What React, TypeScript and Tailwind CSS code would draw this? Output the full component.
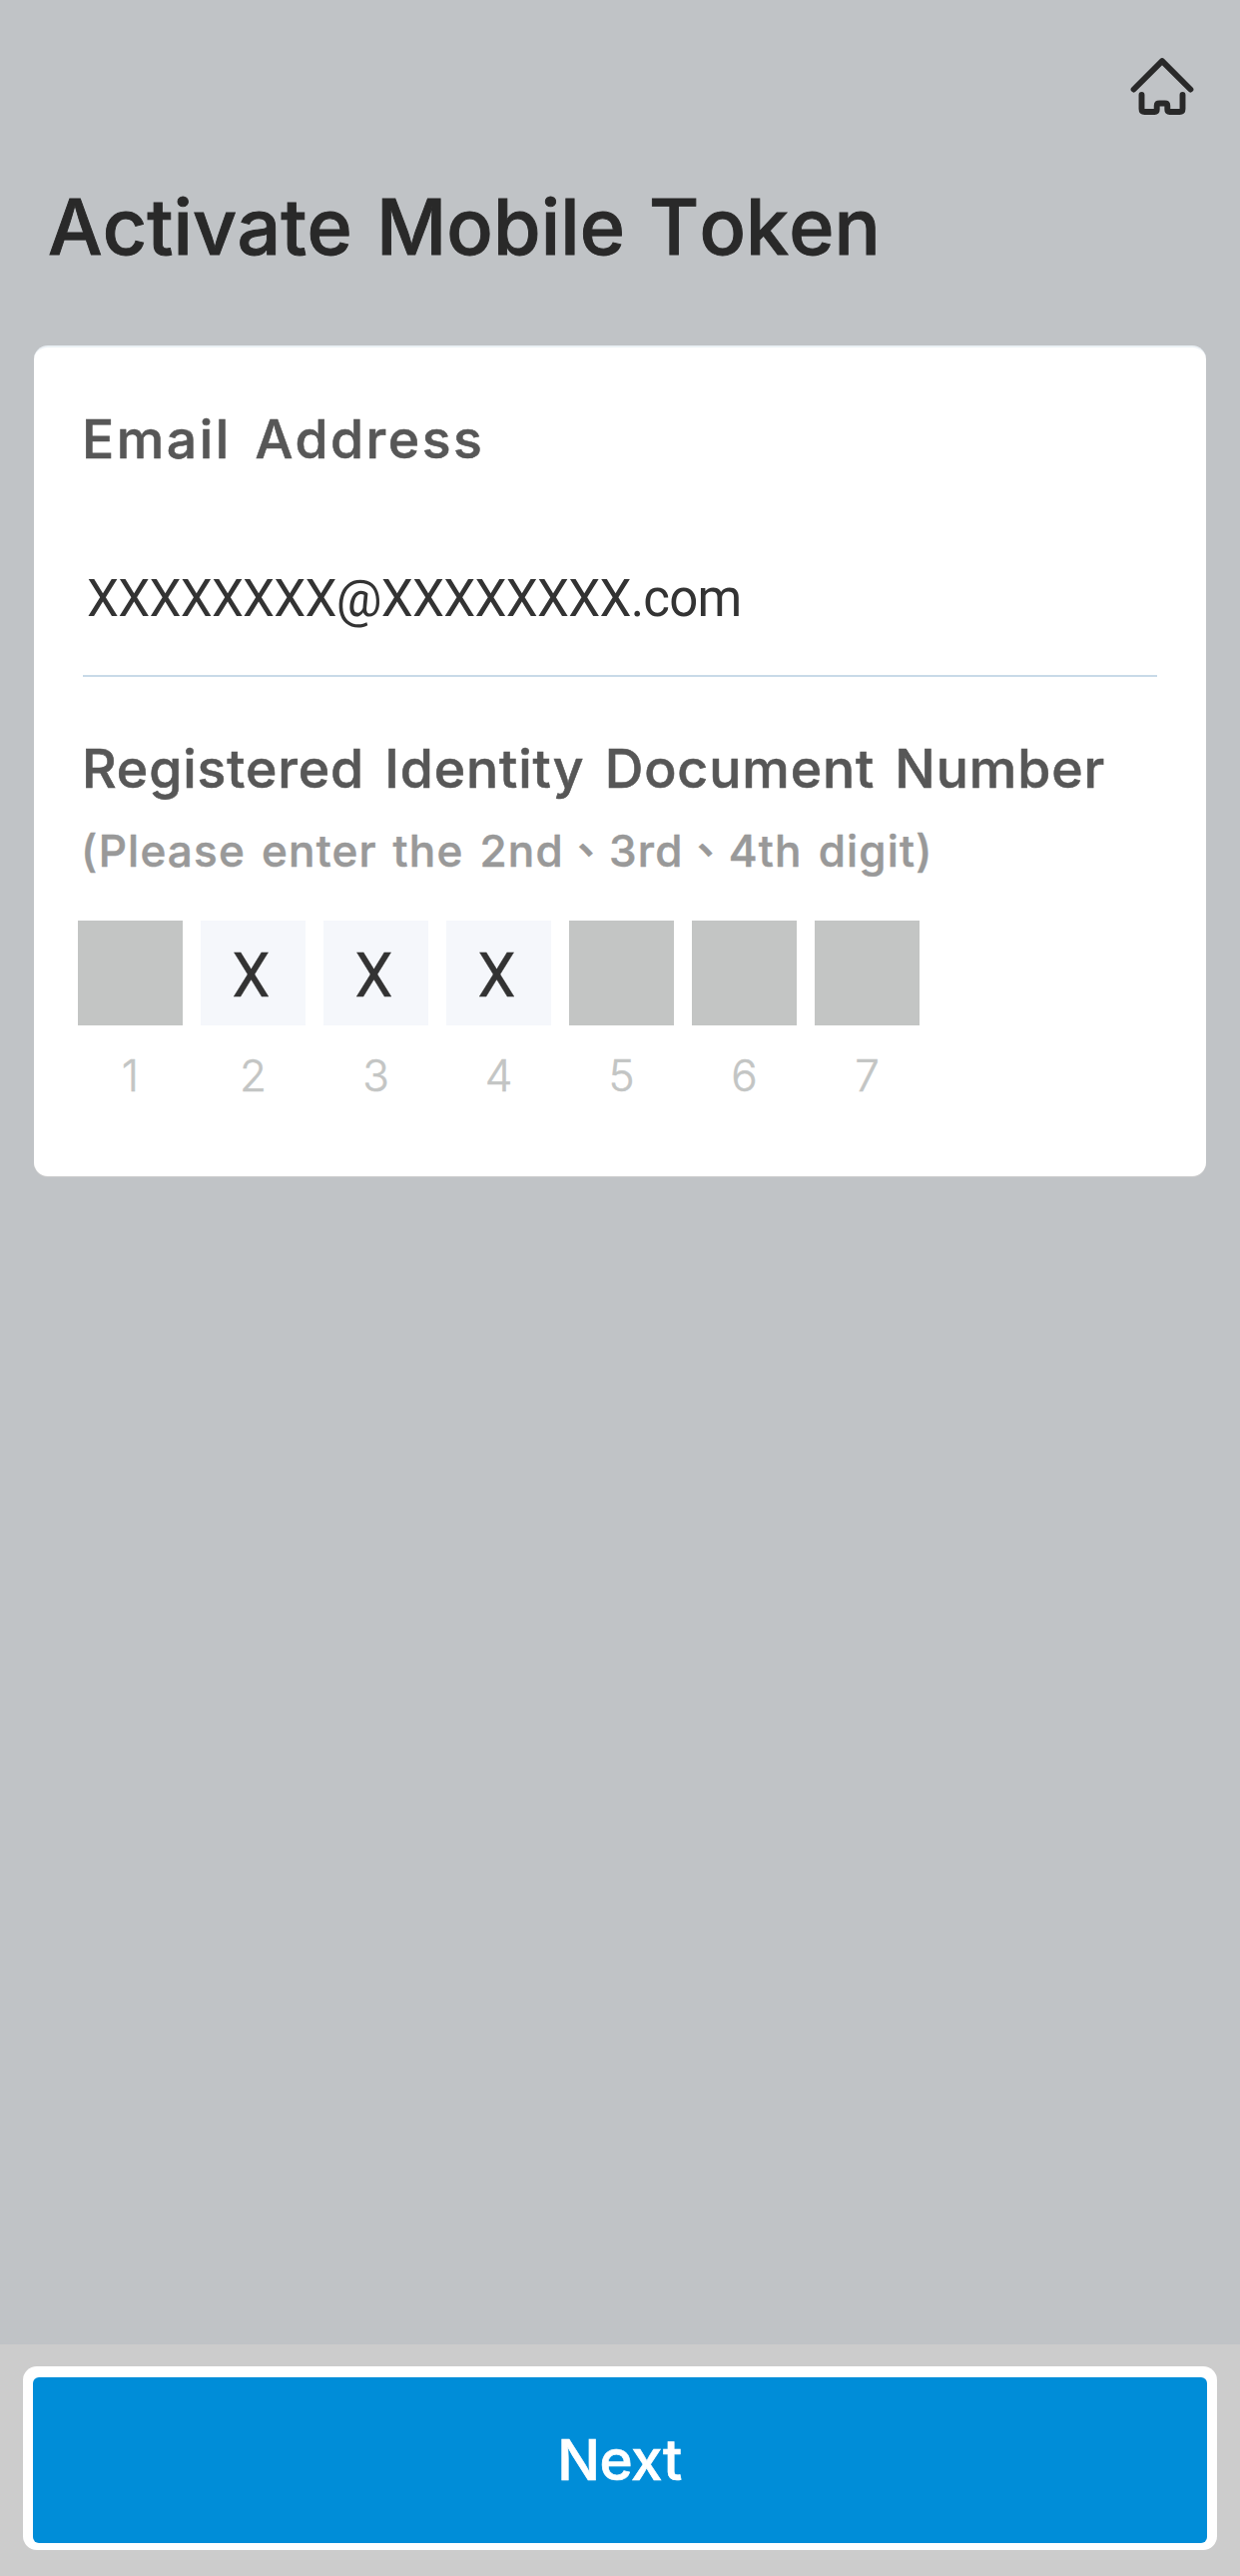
import { useState } from "react";

interface DigitSlot {
  position: number;
  value?: string;
  editable: boolean;
}

const SLOTS: DigitSlot[] = [
  { position: 1, editable: false },
  { position: 2, editable: true, value: "X" },
  { position: 3, editable: true, value: "X" },
  { position: 4, editable: true, value: "X" },
  { position: 5, editable: false },
  { position: 6, editable: false },
  { position: 7, editable: false },
];

function HomeIcon() {
  return (
    <svg width="66" height="60" viewBox="0 0 66 60" fill="none" stroke="#292929" strokeWidth="5.9" strokeLinecap="round" strokeLinejoin="round">
      <path d="M4.6 33.5 33 5.2l28.4 28.3" />
      <path d="M12.5 39v14q0 3 3 3h10q2.2 0 2.2-2.2v-3.8q0-2.500 2.500-2.500h5.600q2.500 0 2.500 2.500v3.800q0 2.200 2.200 2.200h10q3 0 3-3V39" />
    </svg>
  );
}

function DigitBox({ slot }: { slot: DigitSlot }) {
  return (
    <div className="flex w-[105px] flex-col items-center">
      {slot.editable ? (
        <div className="flex h-[105px] w-full items-center justify-center bg-[#f5f7fb] pt-[8px] pr-[4px] font-['Roboto',sans-serif] text-[60.5px] leading-none text-[#333] [-webkit-text-stroke:0.4px]">
          <span>{slot.value}</span>
        </div>
      ) : (
        <div className="h-[105px] w-full bg-[#c3c5c4]" />
      )}
      <span className="mt-[26px] text-[44px] leading-[48px] font-light text-[#c3c5c4] [-webkit-text-stroke:0.5px]">{slot.position}</span>
    </div>
  );
}

export default function App() {
  const [email] = useState("XXXXXXXX@XXXXXXXX.com");

  return (
    <div className="flex h-[2580px] w-[1242px] flex-col bg-[#c0c3c6] font-['Inter','Noto_Sans_CJK_TC',sans-serif]">
      <header className="flex h-[346px] flex-col">
        <div className="flex justify-end pt-[56px] pr-[45px]">
          <HomeIcon />
        </div>
        <h1 className="mt-[64px] ml-[48px] text-[77px] leading-[94px] font-medium tracking-[0.1px] [word-spacing:3.5px] whitespace-nowrap text-[#292929] [font-kerning:none] [-webkit-text-stroke:0.9px]">
          Activate Mobile Token
        </h1>
      </header>

      <main className="mx-[34px] h-[832px] rounded-[14px] border-t-2 border-[#ebf1f5] bg-white px-[49px] shadow-[0_1px_0_#d0d0d0]">
        <h2 className="-ml-[1px] pt-[59px] text-[53.5px] leading-[66px] font-medium tracking-[2.5px] [word-spacing:7px] text-[#575757] [-webkit-text-stroke:0.6px]">
          Email Address
        </h2>
        <div className="mt-[43px] flex h-[162px] items-center border-b-2 border-[#c8dae8] pt-[9px] pl-[4px] font-['Roboto',sans-serif] text-[51px] tracking-[-0.75px] text-[#333]">
          {email}
        </div>

        <h2 className="mt-[59px] -ml-[1px] text-[53.5px] leading-[66px] font-medium tracking-[0.9px] [word-spacing:5px] whitespace-nowrap text-[#575757] [-webkit-text-stroke:0.6px]">
          Registered Identity Document Number
        </h2>
        <p className="mt-[22px] -ml-[2px] text-[44px] leading-[54px] font-medium tracking-[1.2px] [word-spacing:3px] whitespace-nowrap text-[#999] [-webkit-text-stroke:0.5px]">
          (Please enter the 2nd、3rd、4th digit)
        </p>

        {/* ID digits, only the editable positions are filled in */}
        <div className="mt-[43px] -ml-[5px] flex gap-[18px]">
          {SLOTS.map((slot) => (
            <DigitBox key={slot.position} slot={slot} />
          ))}
        </div>
      </main>

      <footer className="mt-auto h-[232px] bg-[#ccc] px-[23px] pt-[22px]">
        <div className="rounded-[14px] bg-white px-[10px] pt-[11px] pb-[7px]">
          <button className="flex h-[166px] w-full items-center justify-center rounded-[6px] bg-[#008dd8] pr-[1px] text-[56.5px] font-medium tracking-[-0.5px] text-white [-webkit-text-stroke:0.7px]">
            Next
          </button>
        </div>
      </footer>
    </div>
  );
}
